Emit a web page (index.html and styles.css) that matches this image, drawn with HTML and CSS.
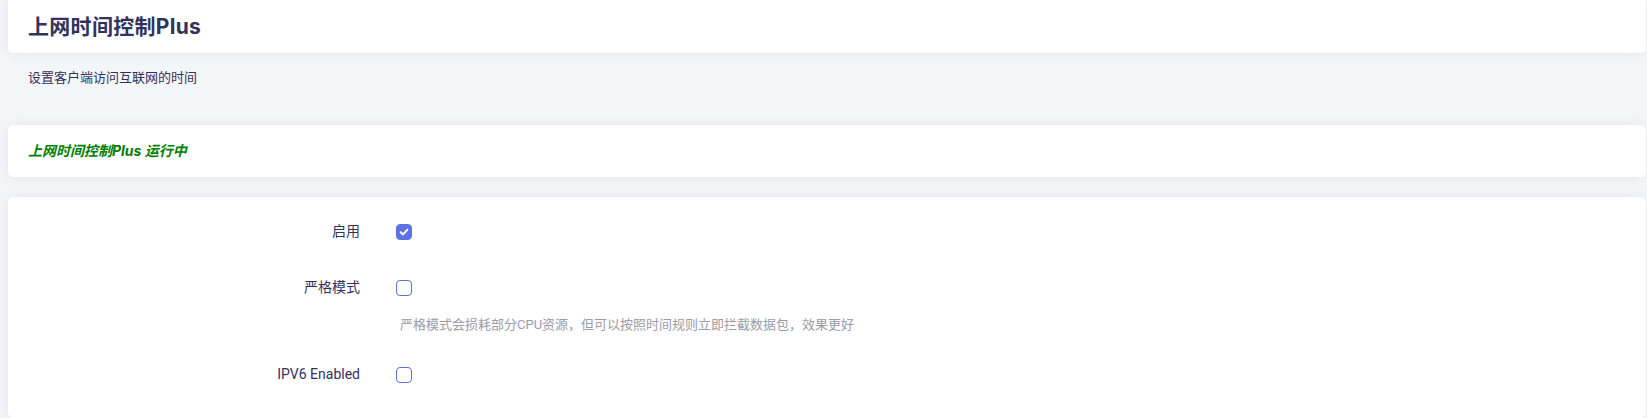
FILE: index.html
```html
<!DOCTYPE html>
<html lang="zh-CN">
<head>
    <meta charset="UTF-8">
    <meta name="viewport" content="width=device-width, initial-scale=1.0">
    <title>上网时间控制Plus</title>
    <link rel="stylesheet" href="styles.css">
</head>
<body>

<div class="main">
    <div class="card page-title">
        <h2>上网时间控制Plus</h2>
    </div>
    <div class="map-descr">设置客户端访问互联网的时间</div>

    <div class="card status">
        <em>上网时间控制Plus 运行中</em>
    </div>

    <div class="card section">
        <div class="cbi-value">
            <label class="cbi-value-title">启用</label>
            <div class="cbi-value-field">
                <span class="cbx checked">
                    <svg viewBox="0 0 16 16" width="16" height="16"><path d="M4.2 8.3l2.6 2.5 5-5.3" fill="none" stroke="#fff" stroke-width="2.2" stroke-linecap="round" stroke-linejoin="round"/></svg>
                </span>
            </div>
        </div>

        <div class="cbi-value">
            <label class="cbi-value-title">严格模式</label>
            <div class="cbi-value-field">
                <span class="cbx"></span>
                <div class="cbi-value-description">严格模式会损耗部分CPU资源，但可以按照时间规则立即拦截数据包，效果更好</div>
            </div>
        </div>

        <div class="cbi-value">
            <label class="cbi-value-title">IPV6 Enabled</label>
            <div class="cbi-value-field">
                <span class="cbx"></span>
            </div>
        </div>
    </div>
</div>

</body>
</html>
```

FILE: styles.css
```css
* {
    margin: 0;
    padding: 0;
    box-sizing: border-box;
    font-family: Roboto, 'Noto Sans CJK SC', sans-serif;
}
body {
    background: #f4f5f7;
    color: #32325d;
    overflow: hidden;
}
.main {
    margin: 0 1px 0 8px;
}
.card {
    background: #fff;
    border-radius: 5px;
    box-shadow: 0 0 12px rgba(136, 152, 170, 0.15);
}
.page-title {
    padding: 13px 20px;
    border-radius: 0 0 5px 5px;
}
.page-title h2 {
    font-family: Inter, 'Noto Sans CJK SC', sans-serif;
    font-size: 21px;
    line-height: 27px;
    font-weight: 700;
    letter-spacing: 0.3px;
    color: #32325d;
}
.map-descr {
    font-size: 13px;
    line-height: 20px;
    padding: 15px 20px 0;
    height: 72px;
}
.status {
    padding: 16px 20px;
    font-size: 14px;
    line-height: 19px;
}
.status em {
    font-family: Inter, 'Noto Sans CJK SC', sans-serif;
    color: #008000;
    font-weight: 700;
    font-style: italic;
}
.section {
    margin-top: 20px;
    padding: 7px 0 15px;
}
.cbi-value {
    display: grid;
    grid-template-columns: 352px 1fr;
    column-gap: 36px;
    padding: 12px 0;
}
.cbi-value-title {
    font-size: 14px;
    line-height: 30px;
    text-align: right;
    color: #32325d;
}
.cbi-value-field {
    display: flex;
    flex-direction: column;
    align-items: flex-start;
}
.cbx {
    display: flex;
    align-items: center;
    justify-content: center;
    width: 16px;
    height: 16px;
    margin: 8px 0;
    border: 1px solid #5e72e4;
    border-radius: 4px;
    background: #fff;
}
.cbx.checked {
    background: #5e72e4;
}
.cbx svg {
    display: block;
}
.cbi-value-description {
    margin: 11px 0 0 4px;
    font-size: 13px;
    line-height: 20px;
    color: #9b9ca8;
}
```
